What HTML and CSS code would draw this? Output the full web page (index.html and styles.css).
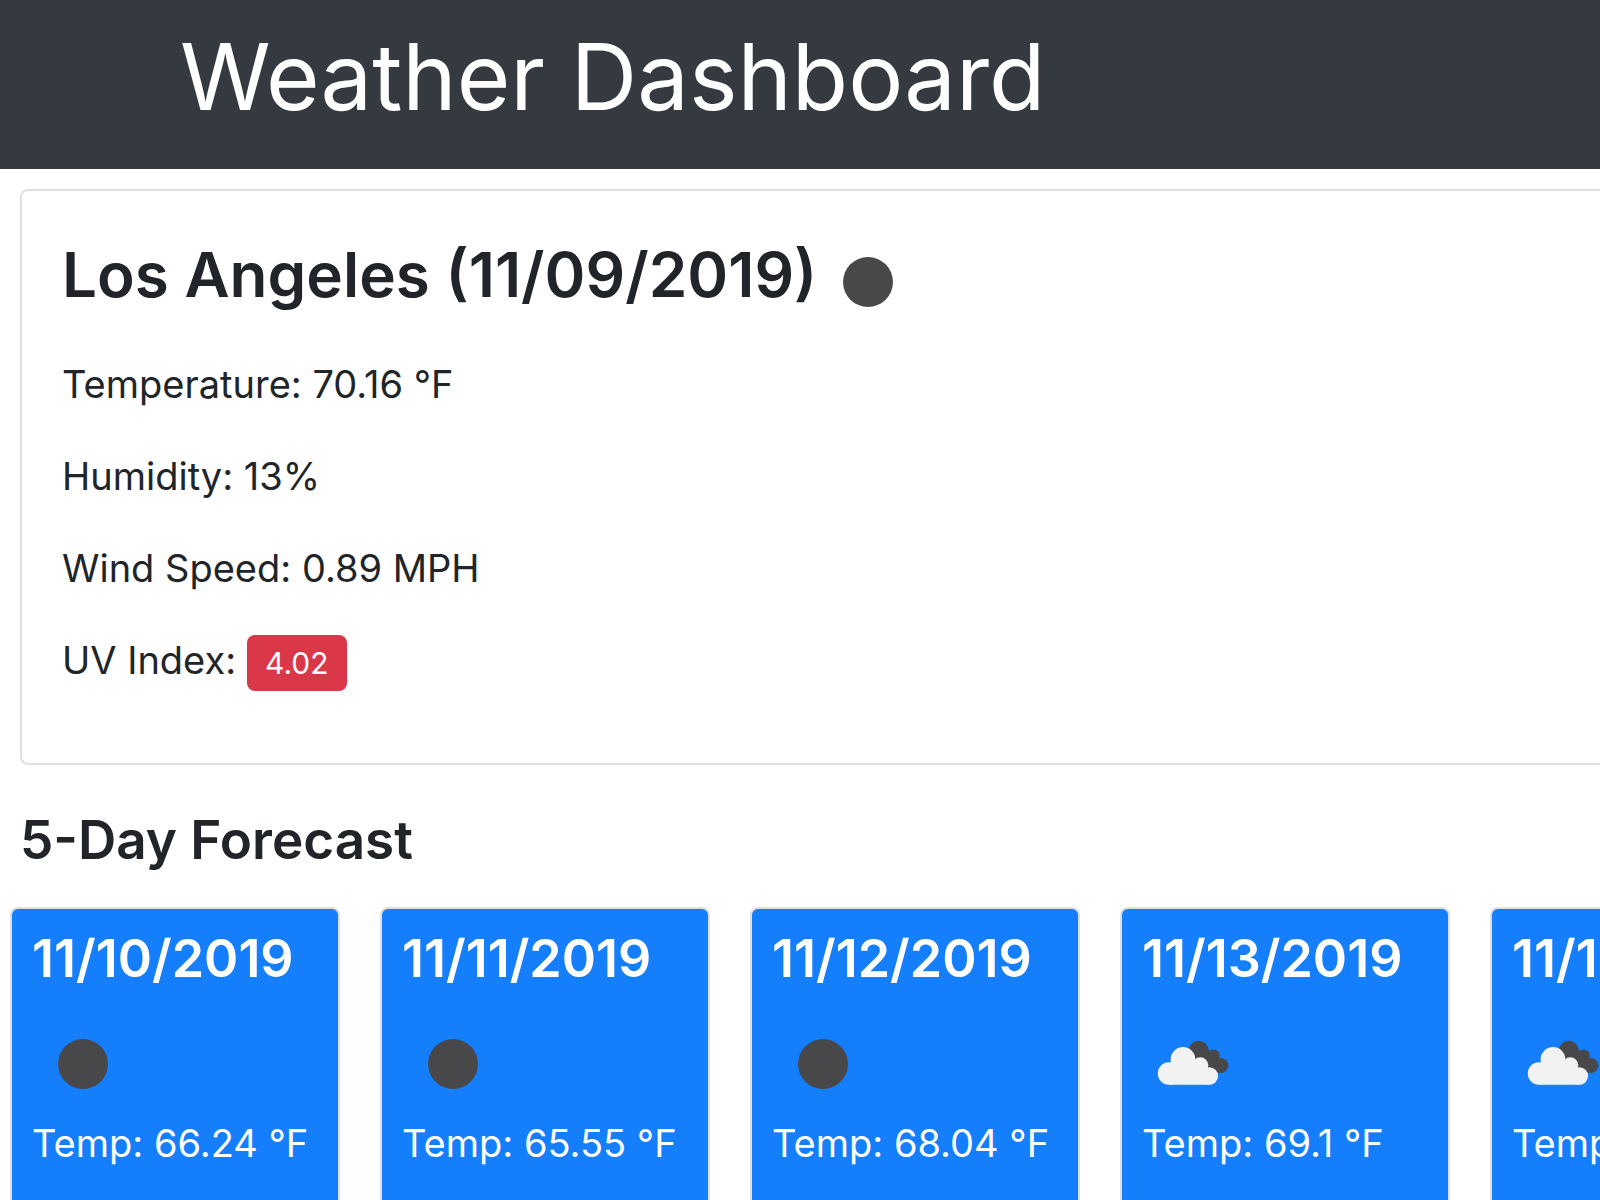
FILE: index.html
```html
<!DOCTYPE html>
<html lang="en">
<head>
<meta charset="utf-8">
<meta name="viewport" content="width=device-width, initial-scale=1">
<title>Weather Dashboard</title>
<link rel="stylesheet" href="styles.css">
</head>
<body>
<svg class="sprite" aria-hidden="true">
  <symbol id="clear-night" viewBox="0 0 100 100">
    <circle cx="51" cy="51" r="25" fill="#48484a"/>
  </symbol>
  <symbol id="broken-clouds" viewBox="-1 -1 100 100">
    <g fill="#48484a">
      <circle cx="55.7" cy="36.8" r="10"/>
      <circle cx="70.5" cy="41.8" r="6.3"/>
      <circle cx="78" cy="51.5" r="7.4"/>
      <path d="M50 38L62 32L70 40L80 54L77 59L70 58Z"/>
    </g>
    <g fill="#f2f2f2">
      <circle cx="26" cy="59.5" r="11.2"/>
      <circle cx="40" cy="45.5" r="12.4"/>
      <circle cx="57.3" cy="51.3" r="8"/>
      <circle cx="66.4" cy="62" r="8.7"/>
      <path d="M26 50L40 44L57 50L68 60L66.4 70.7H26Z"/>
    </g>
  </symbol>
</svg>
<header class="navbar">
  <h1 class="brand">Weather Dashboard</h1>
</header>
<main class="content">
  <section class="current">
    <h2 class="city">Los Angeles (11/09/2019)<svg class="icon" role="img" aria-label="Clear night"><use href="#clear-night"/></svg></h2>
    <p class="reading">Temperature: 70.16 °F</p>
    <p class="reading">Humidity: 13%</p>
    <p class="reading">Wind Speed: 0.89 MPH</p>
    <p class="reading">UV Index: <button class="uv" type="button">4.02</button></p>
  </section>
  <section class="forecast">
    <h3 class="forecast-title">5-Day Forecast</h3>
    <div class="days">
      <article class="day"><h4 class="date">11/10/2019</h4><svg class="icon" role="img" aria-label="Clear night"><use href="#clear-night"/></svg><p class="temp">Temp: 66.24 °F</p></article>
      <article class="day"><h4 class="date">11/11/2019</h4><svg class="icon" role="img" aria-label="Clear night"><use href="#clear-night"/></svg><p class="temp">Temp: 65.55 °F</p></article>
      <article class="day"><h4 class="date">11/12/2019</h4><svg class="icon" role="img" aria-label="Clear night"><use href="#clear-night"/></svg><p class="temp">Temp: 68.04 °F</p></article>
      <article class="day"><h4 class="date">11/13/2019</h4><svg class="icon" role="img" aria-label="Broken clouds"><use href="#broken-clouds"/></svg><p class="temp">Temp: 69.1 °F</p></article>
      <article class="day"><h4 class="date">11/14/2019</h4><svg class="icon" role="img" aria-label="Broken clouds"><use href="#broken-clouds"/></svg><p class="temp">Temp: 69.1 °F</p></article>
    </div>
  </section>
</main>
</body>
</html>
```

FILE: styles.css
```css
* {
  box-sizing: border-box;
}

body {
  display: flex;
  flex-direction: column;
  height: 100vh;
  margin: 0;
  overflow: hidden;
  background: #fff;
  color: #212529;
  font-family: Inter, "Liberation Sans", sans-serif;
  font-size: 38px;
  font-weight: 400;
  line-height: 60px;
}

h1, h2, h3, h4, p {
  margin: 0;
}

.sprite {
  position: absolute;
  width: 0;
  height: 0;
}

.navbar {
  padding: 17px 180px 32px;
  background: #343a40;
  color: #fff;
}

.brand {
  font-size: 92px;
  font-weight: 400;
  line-height: 120px;
  white-space: nowrap;
}

.content {
  display: flex;
  flex: 1;
  flex-direction: column;
  padding: 20px 0 0 20px;
}

.current {
  padding: 34px 40px 44px;
  border: 2px solid #dfdfdf;
  border-right: 0;
  border-radius: 8px 0 0 8px;
}

.city {
  display: flex;
  align-items: flex-start;
  height: 129px;
  font-size: 62px;
  font-weight: 600;
  line-height: 100px;
}

.icon {
  display: block;
  flex: none;
  width: 100px;
  height: 100px;
}

.city .icon {
  margin-top: 6px;
}

.reading {
  margin-bottom: 32px;
}

.reading:last-child {
  margin-bottom: 28px;
}

.uv {
  width: 100px;
  height: 56px;
  padding: 0;
  border: 0;
  border-radius: 8px;
  background: #da3849;
  color: #fff;
  font: 400 30px/56px Inter, "Liberation Sans", sans-serif;
}

.forecast {
  display: flex;
  flex: 1;
  flex-direction: column;
}

.forecast-title {
  padding: 40px 0 32px;
  font-size: 53px;
  font-weight: 600;
  line-height: 70px;
}

.days {
  display: flex;
  flex: 1;
  gap: 40px;
  margin-left: -10px;
}

.day {
  flex: none;
  width: 330px;
  padding: 20px;
  border: 2px solid #dfdfdf;
  border-bottom: 0;
  border-radius: 8px 8px 0 0;
  background: #147efb;
  color: #fff;
}

.date {
  margin-bottom: 24px;
  font-size: 52px;
  font-weight: 600;
  line-height: 60px;
}

.temp {
  white-space: nowrap;
}
```
